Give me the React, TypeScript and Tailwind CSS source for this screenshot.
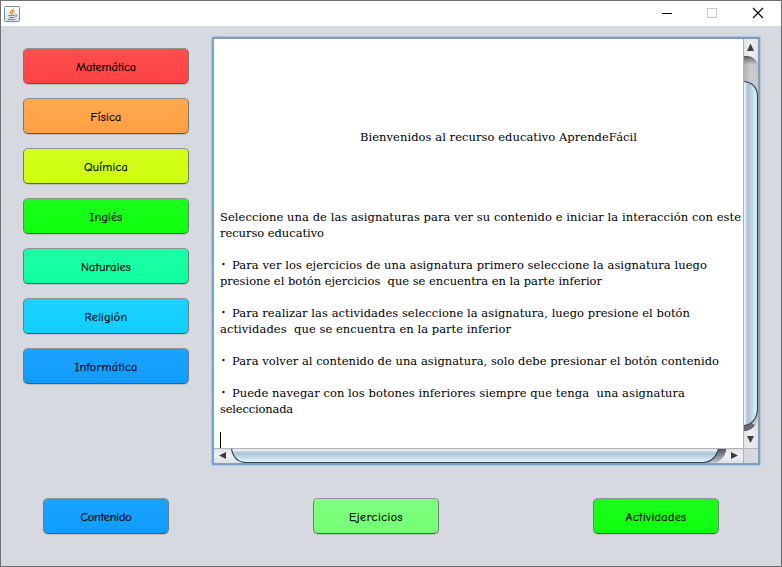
import { useLayoutEffect, useRef, useState } from "react";

type FitProps = { text: string; width: number; className?: string };

// A single line of text whose tracking is adjusted to span the given width.
function FitText({ text, width, className = "" }: FitProps) {
  const ref = useRef<HTMLSpanElement>(null);
  const [spacing, setSpacing] = useState(0);
  useLayoutEffect(() => {
    if (!ref.current) return;
    const old = ref.current.style.letterSpacing;
    ref.current.style.letterSpacing = "0px";
    const natural = ref.current.getBoundingClientRect().width;
    ref.current.style.letterSpacing = old;
    setSpacing((width - natural) / text.length);
  }, [text, width]);
  return (
    <span ref={ref} className={`inline-block whitespace-pre ${className}`} style={{ letterSpacing: `${spacing}px` }}>
      {text}
    </span>
  );
}

const subjects = [
  { label: "Matemática", width: 60, color: "from-[#ff4d4d] to-[#ff4343]" },
  { label: "Física", width: 31, color: "from-[#ffa94f] to-[#ffa043]" },
  { label: "Química", width: 44, color: "from-[#d1ff1b] to-[#cfff0e]" },
  { label: "Inglés", width: 33, color: "from-[#1bff1b] to-[#0eff0e]" },
  { label: "Naturales", width: 50, color: "from-[#1bffa6] to-[#0effa0]" },
  { label: "Religión", width: 43, color: "from-[#1bd1ff] to-[#0ecfff]" },
  { label: "Informática", width: 63, color: "from-[#1ba3ff] to-[#0e9dff]" },
];

const actions = [
  { label: "Contenido", width: 51, color: "from-[#1ba3ff] to-[#0e9dff]", size: "w-[126px] mr-36" },
  { label: "Ejercicios", width: 54, color: "from-[#80ff80] to-[#75ff75]", size: "w-[126px] mr-[154px]" },
  { label: "Actividades", width: 61, color: "from-[#1bff1b] to-[#0eff0e]", size: "w-[126px]" },
];

type Line = { text: string; width: number; bullet?: boolean };

const lines: Line[] = [
  { text: "Seleccione una de las asignaturas para ver su contenido e iniciar la interacción con este", width: 521 },
  { text: "recurso educativo", width: 104 },
  { text: "", width: 0 },
  { text: "Para ver los ejercicios de una asignatura primero seleccione la asignatura luego", width: 475, bullet: true },
  { text: "presione el botón ejercicios  que se encuentra en la parte inferior", width: 382 },
  { text: "", width: 0 },
  { text: "Para realizar las actividades seleccione la asignatura, luego presione el botón", width: 458, bullet: true },
  { text: "actividades  que se encuentra en la parte inferior", width: 291 },
  { text: "", width: 0 },
  { text: "Para volver al contenido de una asignatura, solo debe presionar el botón contenido", width: 487, bullet: true },
  { text: "", width: 0 },
  { text: "Puede navegar con los botones inferiores siempre que tenga  una asignatura", width: 453, bullet: true },
  { text: "seleccionada", width: 73 },
];

function NimbusButton({ label, width, color, size }: { label: string; width: number; color: string; size: string }) {
  return (
    <button
      className={`flex h-9 items-center justify-center rounded-[5px] border border-t-[#8e9196] border-x-[#74777c] border-b-[#55585d] bg-gradient-to-b pt-px font-['Comic_Neue','Comic_Sans_MS',Lato,sans-serif] text-[12px] leading-4 text-black shadow-[0_1px_0_#bbbec4] [-webkit-text-stroke:0.25px_#000] ${size} ${color}`}
    >
      <FitText text={label} width={width} />
    </button>
  );
}

function JavaIcon() {
  return (
    <svg width="16" height="16" viewBox="0 0 16 16">
      <defs>
        <linearGradient id="tile" x2="0" y2="1">
          <stop stopColor="#fff" />
          <stop offset="1" stopColor="#d5e0e8" />
        </linearGradient>
      </defs>
      <rect x=".5" y=".5" width="15" height="15" rx="1" fill="url(#tile)" stroke="#6f8ca1" />
      <path d="M9.3 2.5C9.8 4.2 6 5 6.4 6.6c.2.8 1 1 1.2 1.9M10.4 4.9C8.9 5.1 8 6 8.7 6.9c.4.6.1 1.1-.4 1.5" fill="none" stroke="#f07f19" strokeWidth="1.1" />
      <path d="M4.2 9.6h6.6M5.2 11.5h5M3.8 13.5h7.4M11.2 8.8c2.4-.5 2 1.8-.2 2.3" fill="none" stroke="#5b86a6" strokeWidth="1" />
    </svg>
  );
}

function VerticalScrollbar() {
  return (
    <svg width="15" height="409" viewBox="0 0 15 409" className="block shrink-0">
      <defs>
        <linearGradient id="vTrack" x2="1">
          <stop stopColor="#adb0b5" />
          <stop offset=".5" stopColor="#c9cbd0" />
          <stop offset="1" stopColor="#c5c7cc" />
        </linearGradient>
        <linearGradient id="vShade" x2="0" y2="1">
          <stop stopColor="#55565a" />
          <stop offset="1" stopColor="#777" stopOpacity="0" />
        </linearGradient>
        <linearGradient id="vThumb" x2="1">
          <stop stopColor="#f7fafc" />
          <stop offset=".2" stopColor="#e6edf4" />
          <stop offset=".34" stopColor="#acc2d6" />
          <stop offset=".55" stopColor="#b7cee0" />
          <stop offset="1" stopColor="#e7fbff" />
        </linearGradient>
        <linearGradient id="vButton" x2="1">
          <stop stopColor="#dfe0e3" />
          <stop offset=".5" stopColor="#eeeff1" />
          <stop offset="1" stopColor="#e0e1e4" />
        </linearGradient>
      </defs>
      <rect width="15" height="409" fill="url(#vTrack)" />
      <rect y="17" width="15" height="9" fill="url(#vShade)" />
      <path d="M0 0H15V25Q11 17 4 17H0Z" fill="url(#vButton)" />
      <path d="M0 392H4Q9 391 12 386L8 384L0 387Z" fill="#4a4b50" opacity=".75" />
      <path d="M0 409V392H3Q11 391 15 382V409Z" fill="url(#vButton)" />
      <path d="M-1 42.5H1Q14.5 44 14.5 58V370Q13.5 385 1 386.5H-1Z" fill="url(#vThumb)" stroke="#304359" strokeWidth="1.2" />
      <path d="M.5 0V409" stroke="#aeb1b6" />
      <path d="M7.5 4.5L11 12H4Z M4 397H11L7.5 404Z" fill="#3b3d40" />
    </svg>
  );
}

function HorizontalScrollbar() {
  return (
    <svg width="529" height="15" viewBox="0 0 529 15" className="block shrink-0">
      <defs>
        <linearGradient id="hThumb" x2="0" y2="1">
          <stop stopColor="#f7fafc" />
          <stop offset=".25" stopColor="#dde6ef" />
          <stop offset=".38" stopColor="#acc2d6" />
          <stop offset=".6" stopColor="#bdd3e3" />
          <stop offset="1" stopColor="#e7fbff" />
        </linearGradient>
        <linearGradient id="hButton" x2="0" y2="1">
          <stop stopColor="#dedfe2" />
          <stop offset=".5" stopColor="#f0f1f2" />
          <stop offset="1" stopColor="#dedfe2" />
        </linearGradient>
        <linearGradient id="hTrack" x2="0" y2="1">
          <stop stopColor="#4d4e53" />
          <stop offset="1" stopColor="#c5c7cc" />
        </linearGradient>
      </defs>
      <rect width="529" height="15" fill="url(#hButton)" />
      <path d="M492 0H512V3Q510 11 502 15H488Z" fill="url(#hTrack)" />
      <path d="M17.5 -1V1Q20 14.5 33 14.5H489Q501 14 504.5 1V-1Z" fill="url(#hThumb)" stroke="#304359" strokeWidth="1.2" />
      <path d="M0 .5H529" stroke="#aeb1b6" />
      <path d="M12 4V11L5 7.5Z M517 4V11L524 7.5Z" fill="#3b3d40" />
    </svg>
  );
}

export default function App() {
  return (
    <div className="flex h-[567px] w-[782px] flex-col overflow-hidden border border-[#707070] bg-[#d6d9df] text-black">
      <header className="flex h-[25px] shrink-0 items-center justify-between bg-white pl-[3px]">
        <JavaIcon />
        <svg width="126" height="25" viewBox="655 1 126 25" fill="none" shapeRendering="crispEdges">
          <path d="M662 13.5H672" stroke="#000" />
          <rect x="707.5" y="8.5" width="9" height="9" stroke="#c9c9c9" />
          <path d="M753 8L763 18M763 8L753 18" stroke="#000" strokeWidth="1.1" shapeRendering="auto" />
        </svg>
      </header>
      <main className="flex h-[440px] shrink-0 pl-[22px]">
        <nav className="flex w-[188px] flex-col gap-3.5 pt-[22px]">
          {subjects.map((s) => (
            <NimbusButton key={s.label} {...s} size="w-[166px]" />
          ))}
        </nav>
        <section className="mt-[10px] h-[430px] w-[550px] rounded-[2px] border border-[#b1c4dc] bg-white">
          <div className="h-[428px] w-[548px] border border-[#73a1d0]">
            <div className="flex h-[426px] w-[546px] flex-col border border-t-[#8c97a5] border-r-[#929ba8] border-b-[#8c9eb5] border-l-[#7fa3cc] bg-white">
              <div className="flex h-[409px]">
                <div className="w-[529px] pl-1.5 pt-[90px] font-['DejaVu_Serif',serif] text-[11.5px] leading-4">
                  <div className="h-20 pl-[140px]">
                    <FitText text="Bienvenidos al recurso educativo AprendeFácil" width={277} />
                  </div>
                  {lines.map(({ text, width, bullet }, i) => (
                    <div key={i} className="flex h-4">
                      {bullet && <span className="w-3 pl-px text-[8px]">•</span>}
                      {text && <FitText text={text} width={width} />}
                    </div>
                  ))}
                  <div className="mt-[15px] h-4 w-px bg-black" />
                </div>
                <VerticalScrollbar />
              </div>
              <div className="flex h-[15px]">
                <HorizontalScrollbar />
                <div className="h-[15px] w-[15px] border-l border-t border-[#b1b4b9] bg-[#d6d9df]" />
              </div>
            </div>
          </div>
        </section>
      </main>
      <footer className="flex pl-[42px] pt-8">
        {actions.map((a) => (
          <NimbusButton key={a.label} {...a} />
        ))}
      </footer>
    </div>
  );
}
